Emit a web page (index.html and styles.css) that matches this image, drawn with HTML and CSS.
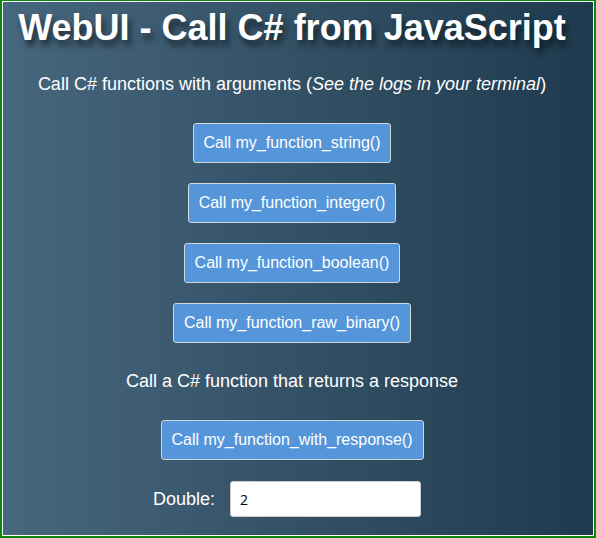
FILE: index.html
```html
<!DOCTYPE html>
<html>
<head>
<meta charset="utf-8">
<title>WebUI - Call C# from JavaScript</title>
<link rel="stylesheet" href="styles.css">
</head>
<body>
<div class="frame">
  <div class="page">
    <h1 class="title">WebUI - Call C# from JavaScript</h1>
    <p class="text">Call C# functions with arguments (<em>See the logs in your terminal</em>)</p>
    <button class="btn">Call my_function_string()</button>
    <button class="btn">Call my_function_integer()</button>
    <button class="btn">Call my_function_boolean()</button>
    <button class="btn">Call my_function_raw_binary()</button>
    <p class="text text-mid">Call a C# function that returns a response</p>
    <button class="btn">Call my_function_with_response()</button>
    <div class="field">
      <label class="label" for="d">Double:</label>
      <input class="input" id="d" type="text" value="2">
    </div>
  </div>
</div>
</body>
</html>
```

FILE: styles.css
```css
html, body {
  margin: 0;
  padding: 0;
  background: #ffffff;
}
.frame {
  width: 596px;
  height: 538px;
  box-sizing: border-box;
  border-style: solid;
  border-color: #0a8a0a;
  border-width: 1px 2px 2px 2px;
  padding: 1px;
  background: #ffffff;
}
.page {
  height: 100%;
  box-sizing: border-box;
  padding-right: 12px;
  overflow: hidden;
  background: linear-gradient(to right, #47677d, #1f3a4e);
  display: flex;
  flex-direction: column;
  align-items: center;
  font-family: "Liberation Sans", Arial, sans-serif;
  color: #ffffff;
}
.title {
  margin: 5px 0 0 0;
  font-size: 36px;
  line-height: 42px;
  font-weight: bold;
  text-shadow: 3px 6px 6px rgba(0, 0, 0, 0.55);
}
.text {
  margin: 25px 0 29px 0;
  font-size: 18px;
  line-height: 20px;
}
.text-mid {
  margin: 8px 0 29px 0;
}
.btn {
  display: block;
  height: 40px;
  margin-bottom: 20px;
  padding: 0 10px;
  background: #5596da;
  border: 1px solid #cfd6dc;
  border-radius: 3px;
  color: #ffffff;
  font-family: "Liberation Sans", Arial, sans-serif;
  font-size: 16px;
}
.field {
  display: flex;
  align-items: center;
  gap: 15px;
  margin: 1px 10px 0 0;
}
.label {
  font-size: 18px;
}
.input {
  width: 191px;
  height: 36px;
  box-sizing: border-box;
  padding: 0 9px;
  border: 1px solid #cccccc;
  border-radius: 3px;
  font-family: "Open Sans", sans-serif;
  font-size: 14px;
  color: #000000;
  background: #ffffff;
}
```
